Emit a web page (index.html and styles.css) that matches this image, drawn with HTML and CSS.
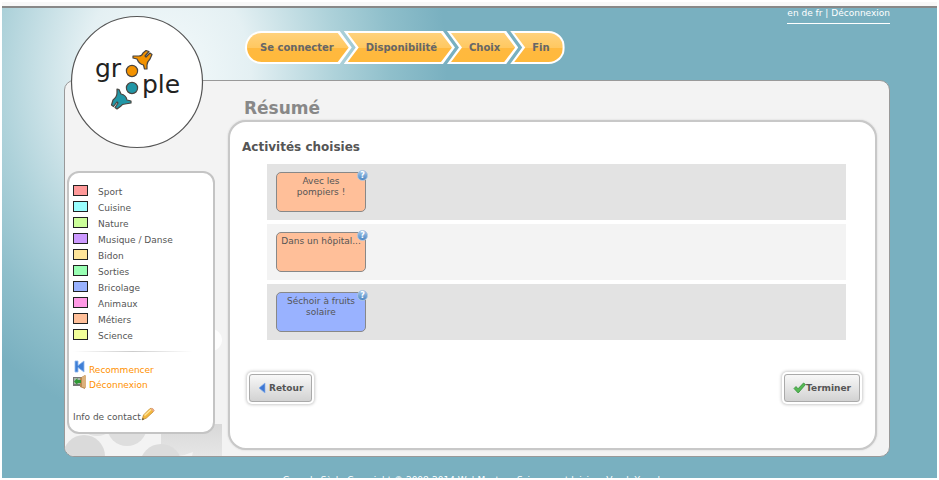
FILE: index.html
```html
<!DOCTYPE html>
<html lang="fr">
<head>
    <meta charset="UTF-8">
    <title>Groople - Résumé</title>
    <link rel="stylesheet" href="styles.css">
</head>
<body>
    <div class="page">
        <div class="wrapper">
            <header class="header">
                <ol class="wizard">
                    <li class="step first"><span>Se connecter</span></li>
                    <li class="step"><span>Disponibilité</span></li>
                    <li class="step"><span>Choix</span></li>
                    <li class="step last"><span>Fin</span></li>
                </ol>
                <nav class="languages">
                    <a href="#en">en</a> <a href="#de">de</a> <a href="#fr">fr</a> | <a href="#logout">Déconnexion</a>
                </nav>
            </header>

            <div class="panel">
                <!-- Grey bubbles in the bottom corner -->
                <svg class="bubbles" width="158" height="130" viewBox="0 0 158 130" aria-hidden="true">
                    <defs>
                        <linearGradient id="bubble" x1="0" y1="0" x2="0" y2="1">
                            <stop offset="0" stop-color="#d8d8d8"/>
                            <stop offset="1" stop-color="#e6e6e6"/>
                        </linearGradient>
                    </defs>
                    <circle cx="146" cy="14" r="11" fill="#fdfdfd"/>
                    <circle cx="32" cy="90" r="20" fill="#e2e2e2"/>
                    <circle cx="62" cy="100" r="20" fill="#dedede"/>
                    <rect x="96" y="98" width="61" height="32" fill="url(#bubble)"/>
                    <circle cx="19" cy="130" r="21" fill="#dadada"/>
                    <circle cx="96" cy="139" r="21" fill="#dcdcdc"/>
                    <path d="M113 130q8-1 15-4l-1 4z" fill="#f3f3f3"/>
                </svg>

                <svg class="logo" width="134" height="134" viewBox="0 0 134 134" role="img" aria-label="groople">
                    <circle cx="67" cy="67" r="65.5" fill="#fff" stroke="#555" stroke-width="1.2"/>
                    <text x="25" y="62" class="logo-text">gr</text>
                    <text x="72" y="78" class="logo-text">ple</text>
                    <g stroke="#4a4540" stroke-width="1.2" stroke-linejoin="round">
                        <circle cx="62" cy="56" r="5.6" fill="#f39200"/>
                        <path d="M63 41L69 41Q72 41 73 38L76 35.500L79 36.500L75 41L76 42L80 38L82 39.500L80 44Q77 47 77 50L77 54L74.500 54L73.500 50Q69 49 67 44L63 43Z" fill="#f39200"/>
                        <circle cx="62" cy="73" r="5.6" fill="#2196a6"/>
                        <path d="M47 74L49 74.500L51 79Q56 80 57 85L61 86L61 88L55 89Q52 89 51 91L47 94L45 92.500L48 88L47 87L43.500 91.500L41.500 90L43 85Q47 82 47 78Z" fill="#2196a6"/>
                    </g>
                </svg>

                <aside class="sidebar">
                    <ul class="legend">
                        <li><span class="swatch sport"></span>Sport</li>
                        <li><span class="swatch cuisine"></span>Cuisine</li>
                        <li><span class="swatch nature"></span>Nature</li>
                        <li><span class="swatch musique"></span>Musique / Danse</li>
                        <li><span class="swatch bidon"></span>Bidon</li>
                        <li><span class="swatch sorties"></span>Sorties</li>
                        <li><span class="swatch bricolage"></span>Bricolage</li>
                        <li><span class="swatch animaux"></span>Animaux</li>
                        <li><span class="swatch metiers"></span>Métiers</li>
                        <li><span class="swatch science"></span>Science</li>
                    </ul>
                    <hr class="separator">
                    <ul class="actions">
                        <li>
                            <a href="#restart">
                                <svg width="14" height="14" viewBox="0 0 14 14"><path d="M2 1h3v4.500L11 1v11L5 7.500V12H2z" fill="#3f7fd6" stroke="#8db8ee" stroke-width=".8"/></svg>
                                Recommencer
                            </a>
                        </li>
                        <li>
                            <a href="#logout">
                                <svg width="14" height="14" viewBox="0 0 14 14"><path d="M0 2h9v9H0z" fill="#777"/><path d="M1 3h8v6H1z" fill="#a9b5ac"/><path d="M7 3l5-3v14l-5-2z" fill="#b98a50"/><path d="M9 2l4-2v13l-4-1z" fill="#dcb27c"/><path d="M1 6.500L4.500 3v2H8v3H4.500v2z" fill="#2f9a35"/></svg>
                                Déconnexion
                            </a>
                        </li>
                    </ul>
                    <p class="contact">
                        Info de contact<svg width="14" height="14" viewBox="0 0 14 14"><path d="M1 13l1.500-5L9 1.500q2-1 4 1.500 0 1-1 2L5.500 11z" fill="#f3b73e" stroke="#b88228" stroke-width=".7"/><path d="M3.500 8.500L10 2.500" stroke="#ffe69a" stroke-width="1.500"/><path d="M9.500 1.500l3 3.500 1-1.500q-1-2.500-3-2.500z" fill="#eaa98c"/><path d="M1 13l.8-2 1.400 1.200z" fill="#444"/></svg>
                    </p>
                </aside>

                <main class="main">
                    <h1>Résumé</h1>
                    <section class="content">
                        <h2>Activités choisies</h2>
                        <div class="rows">
                            <div class="row">
                                <div class="card metiers">Avec les<br>pompiers !
                                    <button type="button" class="help" aria-label="Aide">?</button>
                                </div>
                            </div>
                            <div class="row light">
                                <div class="card metiers">Dans un hôpital...
                                    <button type="button" class="help" aria-label="Aide">?</button>
                                </div>
                            </div>
                            <div class="row">
                                <div class="card bricolage">Séchoir à fruits<br>solaire
                                    <button type="button" class="help" aria-label="Aide">?</button>
                                </div>
                            </div>
                        </div>
                        <div class="buttons">
                            <button type="button" class="button">
                                <svg width="8" height="12" viewBox="0 0 8 12"><path d="M7 1v10L1 6z" fill="#3f78d4" stroke="#86b0ea" stroke-width=".7"/></svg>
                                Retour
                            </button>
                            <button type="button" class="button finish">
                                <svg width="13" height="12" viewBox="0 0 13 12"><path d="M1 6.500L3 4.500 5 6.800 10.500 1 12.500 2.500 5.200 11z" fill="#55b954" stroke="#358f3a" stroke-width=".8"/></svg>
                                Terminer
                            </button>
                        </div>
                    </section>
                </main>
            </div>

            <footer class="footer">Groople Sàrl - Copyright © 2008-2014 WebMaster : Sciences et loisirs - Vaud, Yverdon</footer>
        </div>
    </div>
</body>
</html>
```
FILE: styles.css
```css
* {
    box-sizing: border-box;
}
body {
    margin: 0;
    padding: 2px;
    background-color: #fff;
    color: #555;
    font-family: "DejaVu Sans", Verdana, sans-serif;
    font-size: 9px;
}
ul, ol {
    list-style: none;
    margin: 0;
    padding: 0;
}
svg {
    flex: none;
}
.page {
    height: calc(100vh - 4px);
    overflow: hidden;
    border-top: 4px solid #f8f8f8;
    background: #79b0c0 radial-gradient(ellipse 280px 350px at 165px 70px, #f4fafb 0%, #e4f0f3 30%, #aed2da 60%, #8fbfcb 80%, #79b0c0 100%);
}
.wrapper {
    border-top: 2px solid #888;
    padding: 0 47px 0 62px;
}
.header {
    display: flex;
    justify-content: space-between;
    align-items: flex-start;
    height: 72px;
    padding-left: 181px;
}

/* Steps */
.wizard {
    display: flex;
    padding-top: 23px;
}
.step {
    position: relative;
    height: 33px;
    padding: 0 18px 0 22px;
    background-color: #fff;
    clip-path: polygon(0 0, calc(100% - 12px) 0, 100% 50%, calc(100% - 12px) 100%, 0 100%, 12px 50%);
    color: #666;
    font-size: 10px;
    font-weight: bold;
    line-height: 33px;
}
.step + .step {
    margin-left: -8px;
}
.step::before {
    content: "";
    position: absolute;
    inset: 2px 3px 2px 4px;
    background: linear-gradient(#ffd27c, #ffc861 50%, #ffb93f 51%, #ffb93c);
    clip-path: polygon(0 0, calc(100% - 11px) 0, 100% 50%, calc(100% - 11px) 100%, 0 100%, 11px 50%);
}
.step span {
    position: relative;
}
.step.first {
    padding-left: 15px;
    border-radius: 17px 0 0 17px;
    clip-path: polygon(0 0, calc(100% - 12px) 0, 100% 50%, calc(100% - 12px) 100%, 0 100%);
}
.step.first::before {
    left: 2px;
    border-radius: 15px 0 0 15px;
    clip-path: polygon(0 0, calc(100% - 11px) 0, 100% 50%, calc(100% - 11px) 100%, 0 100%);
}
.step.last {
    padding-right: 15px;
    border-radius: 0 17px 17px 0;
    clip-path: polygon(0 0, 100% 0, 100% 100%, 0 100%, 12px 50%);
}
.step.last::before {
    right: 2px;
    border-radius: 0 15px 15px 0;
    clip-path: polygon(0 0, 100% 0, 100% 100%, 0 100%, 11px 50%);
}
.languages {
    height: 16px;
    border-bottom: 1px solid #fff;
    color: #fff;
    line-height: 11px;
}
.languages a {
    color: #fff;
    text-decoration: none;
}

/* Panel */
.panel {
    position: relative;
    display: flex;
    align-items: flex-start;
    gap: 13px;
    padding: 0 12px 6px 2px;
    border: 1px solid #999;
    border-radius: 10px;
    background-color: #f3f3f3;
}
.bubbles {
    position: absolute;
    left: 0;
    bottom: 0;
    border-bottom-left-radius: 9px;
}
.logo {
    position: absolute;
    left: 5px;
    top: -66px;
}
.logo-text {
    fill: #222;
    font-family: "DejaVu Sans", sans-serif;
    font-size: 25px;
}
.sidebar {
    position: relative;
    width: 148px;
    margin-top: 90px;
    padding: 11px 4px 5px;
    border: 2px solid #c4c4c4;
    border-radius: 12px;
    background-color: #fff;
}
.legend li {
    display: flex;
    gap: 10px;
    height: 16px;
    line-height: 17px;
}
.swatch {
    width: 15px;
    height: 11px;
    margin-top: 1px;
    border: 1px solid #222;
}
.sport { background-color: #ff9999; }
.cuisine { background-color: #99ffff; }
.nature { background-color: #ccff99; }
.musique { background-color: #cc99ff; }
.bidon { background-color: #ffe599; }
.sorties { background-color: #99ffb3; }
.bricolage { background-color: #99b2ff; }
.animaux { background-color: #ff99e5; }
.metiers { background-color: #ffbf99; }
.science { background-color: #f2ff99; }
.separator {
    height: 1px;
    margin: 7px 16px 8px 0;
    border: 0;
    background: linear-gradient(to right, #fff, #ccc 50%, #fff);
}
.actions a {
    display: flex;
    gap: 2px;
    height: 15px;
    color: #ff9100;
    line-height: 21px;
    text-decoration: none;
}
.contact {
    display: flex;
    margin: 17px 0 0;
    line-height: 20px;
}

/* Content */
.main {
    flex: 1;
    position: relative;
}
h1 {
    margin: 0 0 0 16px;
    padding-top: 15px;
    color: #888;
    font-size: 17px;
    line-height: 24px;
}
.content {
    padding: 18px 29px 46px 12px;
    border: 2px solid #c8c8c8;
    border-radius: 18px;
    background-color: #fff;
    box-shadow: 0 0 2px #ccc;
}
h2 {
    margin: 0;
    font-size: 12px;
    line-height: 14px;
}
.rows {
    display: flex;
    flex-direction: column;
    gap: 4px;
    margin: 10px 0 0 25px;
}
.row {
    height: 56px;
    padding: 8px 9px;
    background-color: #e3e3e3;
}
.row.light {
    background-color: #f3f3f3;
}
.card {
    position: relative;
    width: 90px;
    height: 40px;
    padding: 3px 2px;
    border: 1px solid #888;
    border-radius: 5px;
    line-height: 11px;
    text-align: center;
}
.help {
    position: absolute;
    top: -3px;
    right: -3px;
    width: 11px;
    height: 11px;
    padding: 0;
    border: 1px solid #a9c4e0;
    border-radius: 50%;
    background: linear-gradient(#a5c8ea, #4c86c2);
    color: #fff;
    font-family: inherit;
    font-size: 8px;
    font-weight: bold;
    line-height: 9px;
}
.buttons {
    display: flex;
    justify-content: space-between;
    margin: 34px -14px 0 7px;
}
.button {
    display: flex;
    align-items: center;
    gap: 3px;
    height: 28px;
    padding: 0 8px;
    border: 1px solid #aaa;
    border-radius: 3px;
    background: linear-gradient(#f8f8f8, #d2d2d2);
    box-shadow: 0 0 0 2px #fff, 0 0 3px 3px #ccc;
    color: #555;
    font-family: inherit;
    font-size: 9px;
    font-weight: bold;
}
.button.finish {
    gap: 0;
}
.footer {
    padding-top: 18px;
    color: #fff;
    text-align: center;
}
```
